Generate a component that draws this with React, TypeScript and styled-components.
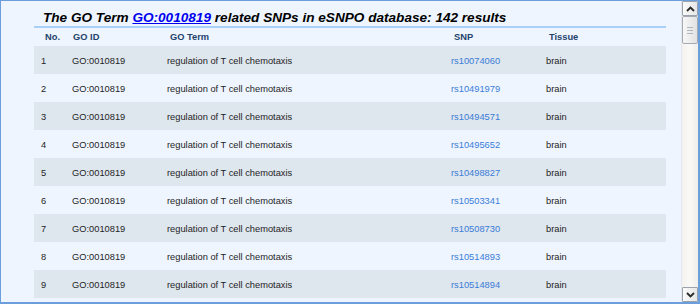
import React from "react";
import styled, { createGlobalStyle } from "styled-components";

const Global = createGlobalStyle`
  html, body { margin: 0; padding: 0; background: #eef5ff; }
  body { font-family: "Liberation Sans", Arial, sans-serif; }
`;

const Frame = styled.div`
  box-sizing: border-box;
  width: 700px;
  height: 304px;
  border-top: 1px solid #6d9edc;
  border-left: 1px solid #6d9edc;
  border-right: 2px solid #6d9edc;
  border-bottom: 2px solid #6d9edc;
  background: #eef5ff;
  display: flex;
  overflow: hidden;
`;

const Content = styled.div`
  flex: 1;
  padding: 9px 0 0 33px;
  overflow: hidden;
`;

const TitleBar = styled.div`
  width: 632px;
  height: 18px;
  border-bottom: 2px solid #a9d1f8;
  padding-left: 9px;
  box-sizing: border-box;
  font-size: 13.6px;
  font-weight: bold;
  font-style: italic;
  color: #000;
  line-height: 15px;
  white-space: nowrap;
`;

const TitleLink = styled.a`
  color: #0000ee;
  text-decoration: underline;
`;

const Grid = styled.div`
  width: 632px;
  display: grid;
  grid-template-columns: 31px 95px 284px 95px 127px;
`;

const HeadCell = styled.div<{ $shift?: number }>`
  height: 18px;
  line-height: 19px;
  padding-left: ${(p) => 8 + (p.$shift ?? 0)}px;
  font-size: 9.3px;
  font-weight: bold;
  color: #24436b;
`;

const Cell = styled.div<{ $odd: boolean }>`
  height: 28px;
  line-height: 30px;
  padding-left: 7px;
  font-size: 9.3px;
  color: #1e1e1e;
  background: ${(p) => (p.$odd ? "#dee6ee" : "transparent")};
  white-space: nowrap;
`;

const SnpLink = styled.a`
  color: #3a7dd6;
  text-decoration: none;
`;

const Scrollbar = styled.div`
  width: 16px;
  display: flex;
  flex-direction: column;
  background: linear-gradient(to right, #f3f2ee 0, #faf9f7 50%, #efeeea 100%);
  border-left: 1px solid #e4e8ee;
`;

const ArrowBtn = styled.div`
  height: 15px;
  box-sizing: border-box;
  border: 1px solid #9aa2ad;
  border-radius: 1px;
  background: linear-gradient(to right, #fbfbfb, #e6e6e6);
  display: flex;
  align-items: center;
  justify-content: center;
`;

const Thumb = styled.div`
  height: 28px;
  box-sizing: border-box;
  border: 1px solid #a4abb5;
  border-radius: 2px;
  background: linear-gradient(to right, #f7f7f7, #e2e2e2);
  display: flex;
  flex-direction: column;
  align-items: center;
  justify-content: center;
  gap: 2px;
`;

const Grip = styled.div`
  width: 6px;
  height: 1px;
  background: #b0b6be;
`;

const Track = styled.div`
  flex: 1;
`;

const Caret = ({ up }: { up?: boolean }) => (
  <svg width="9" height="6" viewBox="0 0 9 6">
    <path
      d={up ? "M1 5 L4.5 1.5 L8 5" : "M1 1 L4.5 4.5 L8 1"}
      fill="none"
      stroke="#2a2a2a"
      strokeWidth="1.8"
    />
  </svg>
);

const snps = [
  "rs10074060",
  "rs10491979",
  "rs10494571",
  "rs10495652",
  "rs10498827",
  "rs10503341",
  "rs10508730",
  "rs10514893",
  "rs10514894",
];

export default function App() {
  return (
    <>
      <Global />
      <Frame>
        <Content>
          <TitleBar>
            The GO Term <TitleLink href="#">GO:0010819</TitleLink> related SNPs in eSNPO database: 142 results
          </TitleBar>
          <Grid>
            <HeadCell $shift={3}>No.</HeadCell>
            <HeadCell>GO ID</HeadCell>
            <HeadCell $shift={2}>GO Term</HeadCell>
            <HeadCell $shift={2}>SNP</HeadCell>
            <HeadCell $shift={2}>Tissue</HeadCell>
            {snps.map((s, i) => {
              const odd = i % 2 === 0;
              return (
                <React.Fragment key={s}>
                  <Cell $odd={odd}>{i + 1}</Cell>
                  <Cell $odd={odd}>GO:0010819</Cell>
                  <Cell $odd={odd}>regulation of T cell chemotaxis</Cell>
                  <Cell $odd={odd}>
                    <SnpLink href="#">{s}</SnpLink>
                  </Cell>
                  <Cell $odd={odd}>brain</Cell>
                </React.Fragment>
              );
            })}
          </Grid>
        </Content>
        <Scrollbar>
          <ArrowBtn>
            <Caret up />
          </ArrowBtn>
          <Thumb>
            <Grip />
            <Grip />
            <Grip />
          </Thumb>
          <Track />
          <ArrowBtn>
            <Caret />
          </ArrowBtn>
        </Scrollbar>
      </Frame>
    </>
  );
}
